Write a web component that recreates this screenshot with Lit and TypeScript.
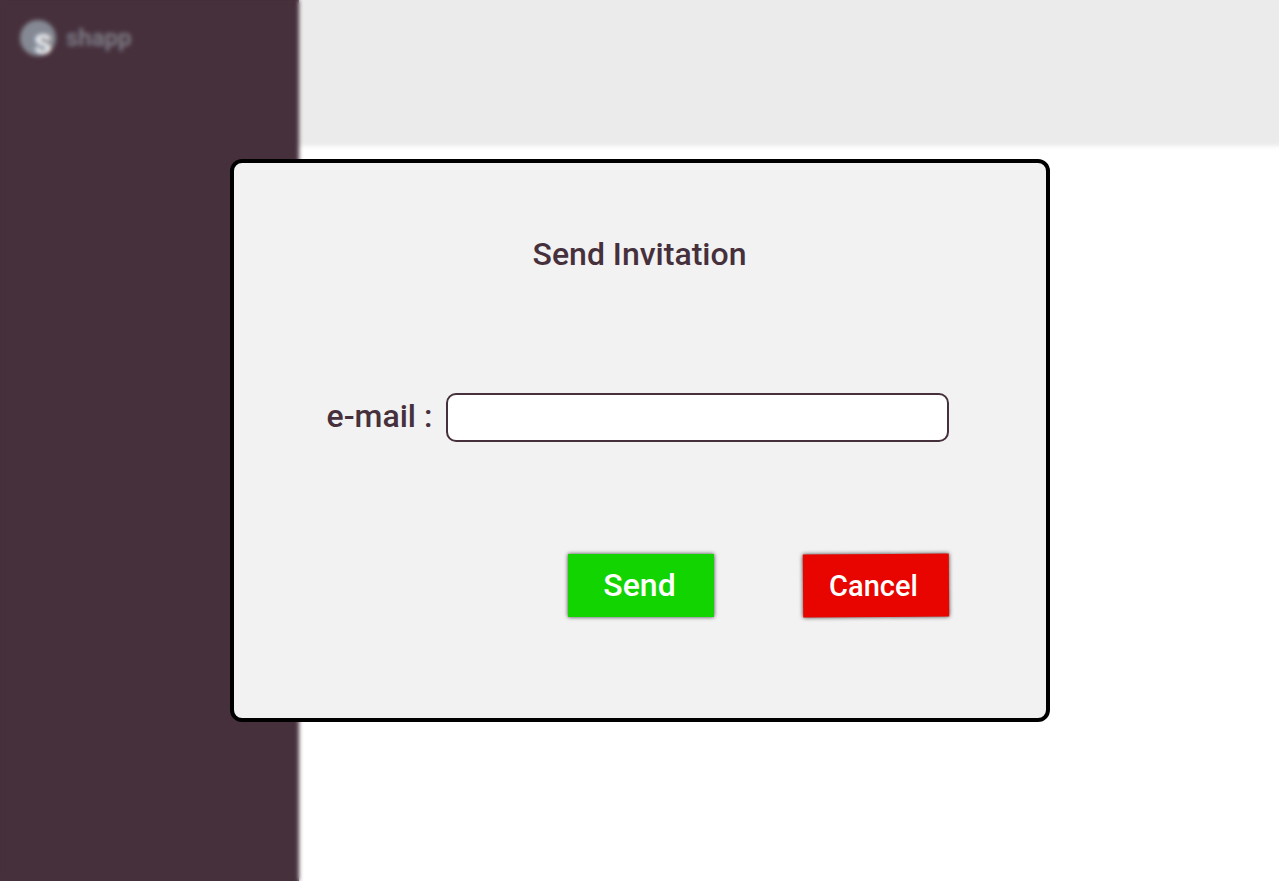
import { LitElement, html, css } from "lit";
import { customElement, state } from "lit/decorators.js";

@customElement("app-root")
export class AppRoot extends LitElement {
  static styles = css`
    :host {
      display: block;
      font-family: Roboto, "Liberation Sans", sans-serif;
      color: #46303c;
    }
    * {
      box-sizing: border-box;
    }
    .page {
      display: flex;
      min-height: 100vh;
      background: #fff;
    }
    .sidebar {
      flex: 0 0 299px;
      padding: 20px;
      background: #46303c;
    }
    .brand {
      display: flex;
      align-items: center;
      gap: 10px;
      color: #7b7983;
      font-size: 24px;
      line-height: 36px;
      font-weight: 700;
      text-decoration: none;
    }
    .mark {
      display: block;
      width: 36px;
      height: 36px;
    }
    .content {
      flex: 1;
    }
    .topbar {
      height: 146px;
      background: #ebebeb;
    }
    .overlay {
      position: fixed;
      inset: 0;
      display: flex;
      align-items: center;
      justify-content: center;
      backdrop-filter: blur(2px);
    }
    .dialog {
      width: 820px;
      max-width: 100%;
      padding: 71px 0 101px;
      border: 4px solid #000;
      border-radius: 12px;
      background: #f2f2f2;
      font-size: 32px;
      line-height: 40px;
      font-weight: 500;
    }
    .title {
      margin: 0 0 119px;
      font-size: inherit;
      font-weight: inherit;
      text-align: center;
    }
    .body {
      padding: 0 97px 0 93px;
    }
    .field {
      display: flex;
      align-items: center;
      gap: 14px;
      margin-bottom: 112px;
    }
    .input {
      flex: 1;
      min-width: 0;
      height: 49px;
      padding: 0 12px;
      border: 2px solid #46303c;
      border-radius: 10px;
      outline: none;
      background: #fff;
      color: inherit;
      font: inherit;
      font-size: 24px;
    }
    .label {
      margin-top: -4px;
    }
    .actions {
      display: flex;
      justify-content: flex-end;
      gap: 89px;
    }
    .button {
      position: relative;
      z-index: 0;
      width: 146px;
      height: 63px;
      padding: 0 2px 2px 0;
      border: 0;
      background: none;
      color: #fff;
      font: inherit;
      cursor: pointer;
    }
    .button::before {
      content: "";
      position: absolute;
      inset: 0;
      z-index: -1;
      background: #11d400;
      box-shadow: 0 0 4px rgba(0, 0, 0, 0.75);
    }
    .cancel {
      padding: 0 4px 0 0;
      font-size: 29px;
    }
    .cancel::before {
      background: #e80500;
      transform: rotate(-0.4deg);
    }
  `;

  @state() private email = "";

  private onInput(e: Event) {
    this.email = (e.target as HTMLInputElement).value;
  }

  render() {
    return html`
      <div class="page">
        <aside class="sidebar">
          <a class="brand" href="#">
            <svg class="mark" viewBox="0 0 36 36" overflow="visible" aria-hidden="true">
              <circle cx="18" cy="18" r="18" fill="#858993" />
              <text
                x="14"
                y="34"
                font-size="28"
                font-weight="900"
                fill="#eef0f3"
              >S</text>
            </svg>
            <span>shapp</span>
          </a>
        </aside>
        <main class="content"><header class="topbar"></header></main>
      </div>
      <div class="overlay">
        <form
          class="dialog"
          role="dialog"
          aria-labelledby="title"
          @submit=${(e: Event) => e.preventDefault()}
        >
          <h1 class="title" id="title">Send Invitation</h1>
          <div class="body">
            <div class="field">
              <label class="label" for="email">e-mail :</label>
              <input
                class="input"
                id="email"
                type="email"
                .value=${this.email}
                @input=${this.onInput}
              />
            </div>
            <div class="actions">
              <button class="button" type="submit">Send</button>
              <button class="button cancel" type="button">Cancel</button>
            </div>
          </div>
        </form>
      </div>
    `;
  }
}
